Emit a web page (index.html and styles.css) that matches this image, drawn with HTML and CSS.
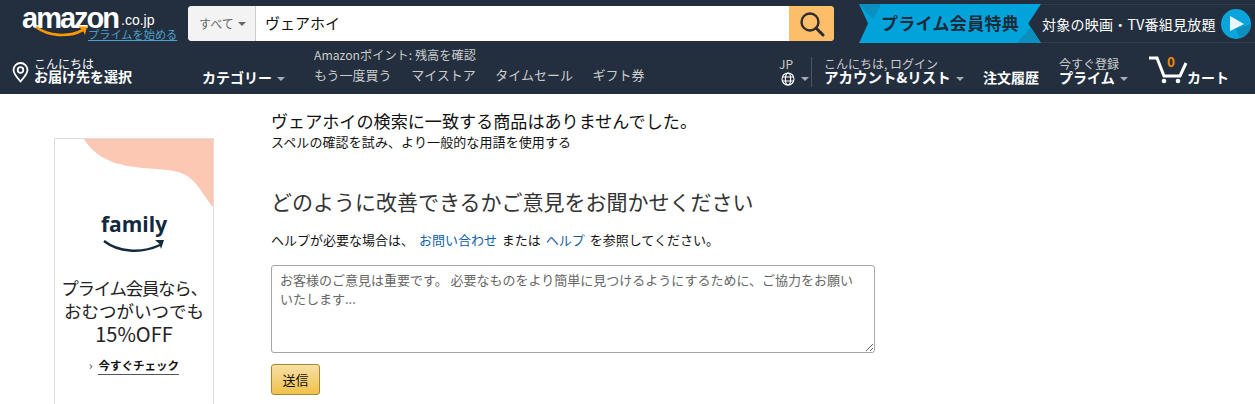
FILE: index.html
```html
<!DOCTYPE html>
<html lang="ja">
<head>
<meta charset="utf-8">
<title>Amazon.co.jp ヴェアホイ</title>
<link rel="stylesheet" href="styles.css">
</head>
<body>
<header class="header">
  <div class="top">
    <a class="logo">
      <span class="logo-word">amazon</span><span class="logo-tld">.co.jp</span>
      <svg class="smile" width="58" height="14" viewBox="0 0 58 14"><path d="M1 2C13 11 33 13 48 5" fill="none" stroke="#f90" stroke-width="2.600"/><path d="M43 1.500L52 1.500L50 10L48 5.500Z" fill="#f90"/></svg>
      <span class="logo-link">プライムを始める</span>
    </a>
    <form class="search">
      <div class="search-cat">すべて<i class="caret caret-dim"></i></div>
      <div class="search-input">ヴェアホイ</div>
      <div class="search-btn">
        <svg width="26" height="26" viewBox="0 0 26 26"><circle cx="11" cy="11" r="8.500" fill="none" stroke="#2d2d2d" stroke-width="2.400"/><path d="M17 17L24 24" stroke="#2d2d2d" stroke-width="3" stroke-linecap="round"/></svg>
      </div>
    </form>
    <div class="promo">
      <div class="ribbon"><span>プライム会員特典</span>
        <svg class="ribbon-shade" width="24" height="39" viewBox="0 0 24 39"><path d="M0 39L15 22L24 39Z" fill="#0a8fbe"/></svg>
        <svg class="ribbon-shade-l" width="24" height="39" viewBox="0 0 24 39"><path d="M0 0H22L14 15Z" fill="#0a8fbe"/></svg>
      </div>
      <div class="promo-text">対象の映画・TV番組見放題</div>
      <svg class="promo-play" width="30" height="30" viewBox="0 0 30 30"><circle cx="15" cy="15" r="15" fill="#0aa5dc"/><path d="M15 20L30 15A15 15 0 0 1 19 29.500Z" fill="#0a8fbe"/><path d="M9 7L23 15L9 22Z" fill="#e9f6fb"/></svg>
    </div>
  </div>
  <nav class="bottom">
    <div class="loc">
      <svg width="17" height="21" viewBox="0 0 17 21"><path d="M8.500 19.500C4 14.500 1.500 11.500 1.500 8A7 7 0 0 1 15.500 8C15.500 11.500 13 14.500 8.500 19.500Z" fill="none" stroke="#fff" stroke-width="1.800"/><circle cx="8.500" cy="8" r="2.800" fill="none" stroke="#fff" stroke-width="1.800"/></svg>
      <div class="stack">
        <span class="small white">こんにちは</span>
        <strong class="big loc-name">お届け先を選択</strong>
      </div>
    </div>
    <div class="cat"><strong class="big">カテゴリー</strong><i class="caret"></i></div>
    <div class="links">
      <div class="points">Amazonポイント: 残高を確認</div>
      <div class="link-row">
        <a>もう一度買う</a><a>マイストア</a><a>タイムセール</a><a>ギフト券</a>
      </div>
    </div>
    <div class="lang">
      <span class="small">JP</span>
      <div class="lang-icon">
        <svg width="14" height="14" viewBox="0 0 14 14"><g fill="none" stroke="#fff" stroke-width="1.100"><circle cx="7" cy="7" r="6"/><ellipse cx="7" cy="7" rx="2.600" ry="6"/><path d="M1 5H13M1 9H13"/></g></svg>
        <i class="caret"></i>
      </div>
    </div>
    <div class="account stack">
      <span class="small">こんにちは, ログイン</span>
      <div class="stack-row"><strong class="big wide">アカウント&amp;リスト</strong><i class="caret"></i></div>
    </div>
    <strong class="big orders">注文履歴</strong>
    <div class="prime stack">
      <span class="small">今すぐ登録</span>
      <div class="stack-row"><strong class="big">プライム</strong><i class="caret"></i></div>
    </div>
    <div class="cart">
      <span class="cart-count">0</span>
      <svg width="40" height="28" viewBox="0 0 40 28"><path d="M1 2H9L16 20H32L38 7" fill="none" stroke="#fff" stroke-width="3"/><circle cx="16" cy="25" r="2.300" fill="#fff"/><circle cx="30" cy="25" r="2.300" fill="#fff"/></svg>
      <strong class="big">カート</strong>
    </div>
  </nav>
</header>
<div class="page">
  <aside class="ad">
    <svg class="ad-blob" width="129" height="68" viewBox="0 0 129 68"><path d="M0 0H129V68C118 55 112 38 94 33C70 26 22 36 0 0Z" fill="#fcc8b4"/></svg>
    <div class="ad-brand">family</div>
    <svg class="ad-smile" width="62" height="16" viewBox="0 0 62 16"><path d="M1 2C15 13 38 15 57 6" fill="none" stroke="#13293d" stroke-width="2.400"/><path d="M52 1L61 1L58 10L56.500 5Z" fill="#13293d"/></svg>
    <p class="ad-copy"><span class="ad-line1">プライム会員なら、</span><br>おむつがいつでも<br><span class="ad-line3">15%OFF</span></p>
    <div class="ad-cta"><span class="ad-chev">›</span><span class="ad-link">今すぐチェック</span></div>
  </aside>
  <main class="main">
    <h1 class="title">ヴェアホイの検索に一致する商品はありませんでした。</h1>
    <p class="sub">スペルの確認を試み、より一般的な用語を使用する</p>
    <h2 class="heading">どのように改善できるかご意見をお聞かせください</h2>
    <p class="help">ヘルプが必要な場合は、 <a>お問い合わせ</a> または <a>ヘルプ</a> を参照してください。</p>
    <textarea class="feedback" placeholder="お客様のご意見は重要です。 必要なものをより簡単に見つけるようにするために、ご協力をお願いいたします..."></textarea>
    <button class="send" type="button">送信</button>
  </main>
</div>
</body>
</html>
```
FILE: styles.css
```css
* { box-sizing: border-box; }
html, body { margin: 0; height: 404px; overflow: hidden; }
body { font-family: "Noto Sans CJK JP", "Liberation Sans", sans-serif; background: #fff; color: #111; }
a { text-decoration: none; }
p, h1, h2 { margin: 0; font-weight: 400; }

.header { background: #232f3e; height: 94px; color: #fff; }
.top { display: flex; height: 47px; align-items: flex-start; }
.logo { position: relative; display: block; width: 188px; height: 47px; flex: none; }
.logo-word { position: absolute; left: 22px; top: 1px; font: 700 29px/34px "Liberation Sans", sans-serif; letter-spacing: -2px; color: #fff; }
.logo-tld { position: absolute; left: 121px; top: 12px; font: 400 14px/16px "Liberation Sans", sans-serif; color: #fff; }
.smile { position: absolute; left: 35px; top: 25px; }
.logo-link { position: absolute; left: 88px; top: 26px; font-size: 11.200px; line-height: 16px; color: #4c9fc6; text-decoration: underline; white-space: nowrap; }

.search { display: flex; width: 646px; height: 35px; margin-top: 6px; border-radius: 4px; overflow: hidden; background: #fff; flex: none; }
.search-cat { width: 68px; background: #f3f3f3; border-right: 1px solid #cdcdcd; color: #666; font-size: 12px; line-height: 35px; padding-left: 11px; display: flex; align-items: center; gap: 4px; }
.search-input { flex: 1; font-size: 15px; line-height: 33px; color: #111; padding-left: 9px; }
.search-btn { width: 45px; background: #febd69; display: flex; align-items: center; justify-content: center; padding-top: 1px; }

.promo { display: flex; align-items: center; height: 39px; margin: 4px 0 0 25px; flex: 1; border: solid #2e3c4d; border-width: 1px 0; position: relative; }
.ribbon { position: relative; width: 182px; height: 39px; background: #00a3da; color: #1d2a3a; font-size: 17px; font-weight: 700; line-height: 37px; padding-left: 22px; letter-spacing: 0.300px; flex: none; clip-path: polygon(0 0, 100% 0, 93% 50%, 100% 100%, 0 100%, 5% 50%); margin-top: -1px; margin-bottom: -1px; white-space: nowrap; }
.ribbon-shade { position: absolute; right: 0; top: 0; }
.ribbon-shade-l { position: absolute; left: 0; top: 0; }
.promo-text { font-size: 14px; letter-spacing: 0.250px; color: #fff; margin-left: 1px; white-space: nowrap; width: 177px; }
.promo-play { flex: none; margin-left: 2px; }

.bottom { display: flex; height: 47px; align-items: flex-start; position: relative; }
.stack { display: flex; flex-direction: column; }
.stack-row { margin-top: -2px; line-height: 14px; }
.small { font-size: 12px; line-height: 14px; color: #ccc; white-space: nowrap; }
.white { color: #fff; }
.big { font-size: 14px; line-height: 14px; font-weight: 700; color: #fff; white-space: nowrap; }
.wide { font-size: 14.500px; }
.caret { display: inline-block; width: 0; height: 0; border: solid transparent; border-width: 4px 4px 0; border-top-color: #a7acb2; margin-left: 5px; vertical-align: 2px; }
.caret-dim { border-top-color: #666; margin-left: 0; }

.loc { display: flex; width: 202px; padding: 14px 0 0 12px; gap: 5px; flex: none; }
.loc svg { margin-top: 1px; }
.loc .stack { margin-top: -4px; }
.loc-name { margin-top: -2px; }
.cat { width: 112px; padding-top: 17px; flex: none; }
.links { width: 466px; flex: none; }
.points { font-size: 12.200px; line-height: 16px; color: #ccc; white-space: nowrap; }
.link-row { display: flex; gap: 19.500px; margin-top: 2px; font-size: 13px; line-height: 20px; color: #ccc; white-space: nowrap; }
.lang { width: 33px; height: 30px; margin-top: 10px; border-right: 1px solid #4a5563; flex: none; display: flex; flex-direction: column; margin-left: -1px; }
.lang-icon { display: flex; align-items: center; margin: 1px 0 0 2px; }
.lang-icon .caret { margin-left: 6px; }
.account { width: 159px; margin: 10px 0 0 12px; flex: none; }
.orders { width: 76px; margin-top: 23px; flex: none; }
.prime { width: 89px; margin-top: 10px; flex: none; }
.cart { position: relative; display: flex; align-items: flex-end; height: 32px; margin-top: 5px; flex: none; }
.cart svg { flex: none; }
.cart .big { margin: 0 0 0 -1px; }
.cart-count { position: absolute; left: 19px; top: 1px; font-size: 13.500px; line-height: 16px; font-weight: 700; color: #f08804; }

.page { display: flex; align-items: flex-start; padding-left: 54px; }
.ad { position: relative; width: 160px; height: 266px; margin-top: 44px; border: solid #ddd; border-width: 1px 1px 0; display: flex; flex-direction: column; align-items: center; flex: none; color: #222; }
.ad-blob { position: absolute; right: 0; top: 0; }
.ad-brand { margin-top: 72px; font: 700 21px/26px "Open Sans", sans-serif; color: #13293d; }
.ad-smile { margin-top: 2px; }
.ad-copy { margin-top: 21px; font-size: 17.500px; line-height: 23px; text-align: center; white-space: nowrap; }
.ad-line1 { letter-spacing: -1.300px; }
.ad-line3 { font-size: 20px; }
.ad-cta { display: flex; align-items: baseline; gap: 6px; margin-top: 11px; font-size: 11.500px; line-height: 17px; }
.ad-link { font-weight: 700; border-bottom: 1px solid #555; color: #111; }

.main { margin-left: 57px; flex: none; width: 700px; }
.title { margin-top: 15px; font-size: 17.100px; line-height: 24px; color: #111; white-space: nowrap; }
.sub { margin-top: 1px; font-size: 13px; line-height: 16px; color: #111; letter-spacing: 0.100px; }
.heading { margin-top: 36px; font-size: 21px; line-height: 30px; color: #333; }
.help { margin-top: 15px; font-size: 13px; line-height: 18px; color: #111; word-spacing: 2px; }
.help a { color: #0f5fa8; }
.feedback { display: block; width: 604px; height: 88px; margin-top: 16px; padding: 4px 8px; border: 1px solid #a6a6a6; border-radius: 3px; font: 13px/19px "Noto Sans CJK JP", sans-serif; color: #111; background: #fff; }
.feedback::placeholder { color: #666; opacity: 1; }
.send { display: block; width: 49px; height: 31px; margin-top: 11px; padding: 0; border: 1px solid #a88734; border-radius: 3px; background: linear-gradient(#f7dfa5, #f0c14b); font: 13px/29px "Noto Sans CJK JP", sans-serif; color: #111; }
```
